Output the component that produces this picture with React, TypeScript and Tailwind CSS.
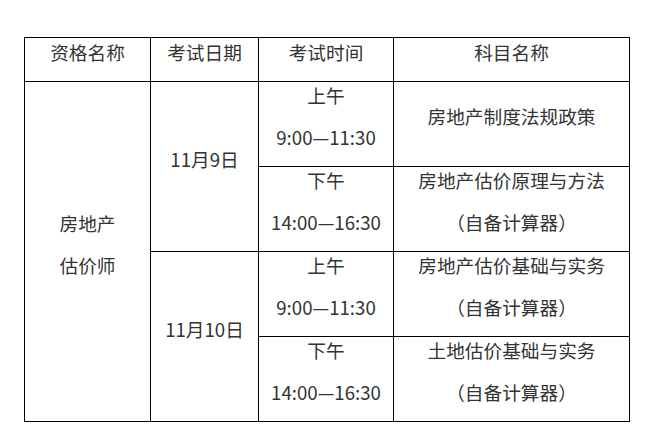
import React from "react";

function Cell({
  lines,
  className = "",
}: {
  lines: string[];
  className?: string;
}) {
  return (
    <div
      className={`flex flex-col items-center justify-center overflow-visible border-r border-b border-black ${className}`}
    >
      <div className="flex flex-col items-center pb-[16px]">
        {lines.map((l, i) => (
          <div key={i} className="h-[42px] leading-[42px] whitespace-nowrap">
            {l}
          </div>
        ))}
      </div>
    </div>
  );
}

export default function App() {
  return (
    <div className="w-[670px] h-[430px] bg-white pt-[37px] pl-[24px] overflow-hidden">
      <div
        className="grid w-[606px] border-l border-t border-black text-[18.67px] text-[#333333]"
        style={{
          gridTemplateColumns: "126px 108px 135px 236px",
          gridTemplateRows: "44px 85px 85px 85px 85px",
          fontFamily: '"Noto Sans CJK SC", "Noto Sans", sans-serif',
        }}
      >
        <Cell lines={["资格名称"]} />
        <Cell lines={["考试日期"]} />
        <Cell lines={["考试时间"]} />
        <Cell lines={["科目名称"]} />

        <Cell lines={["房地产", "估价师"]} className="row-span-4" />
        <Cell lines={["11月9日"]} className="row-span-2" />
        <Cell lines={["上午", "9:00—11:30"]} />
        <Cell lines={["房地产制度法规政策"]} />

        <Cell lines={["下午", "14:00—16:30"]} />
        <Cell lines={["房地产估价原理与方法", "（自备计算器）"]} />

        <Cell lines={["11月10日"]} className="row-span-2" />
        <Cell lines={["上午", "9:00—11:30"]} />
        <Cell lines={["房地产估价基础与实务", "（自备计算器）"]} />

        <Cell lines={["下午", "14:00—16:30"]} />
        <Cell lines={["土地估价基础与实务", "（自备计算器）"]} />
      </div>
    </div>
  );
}
